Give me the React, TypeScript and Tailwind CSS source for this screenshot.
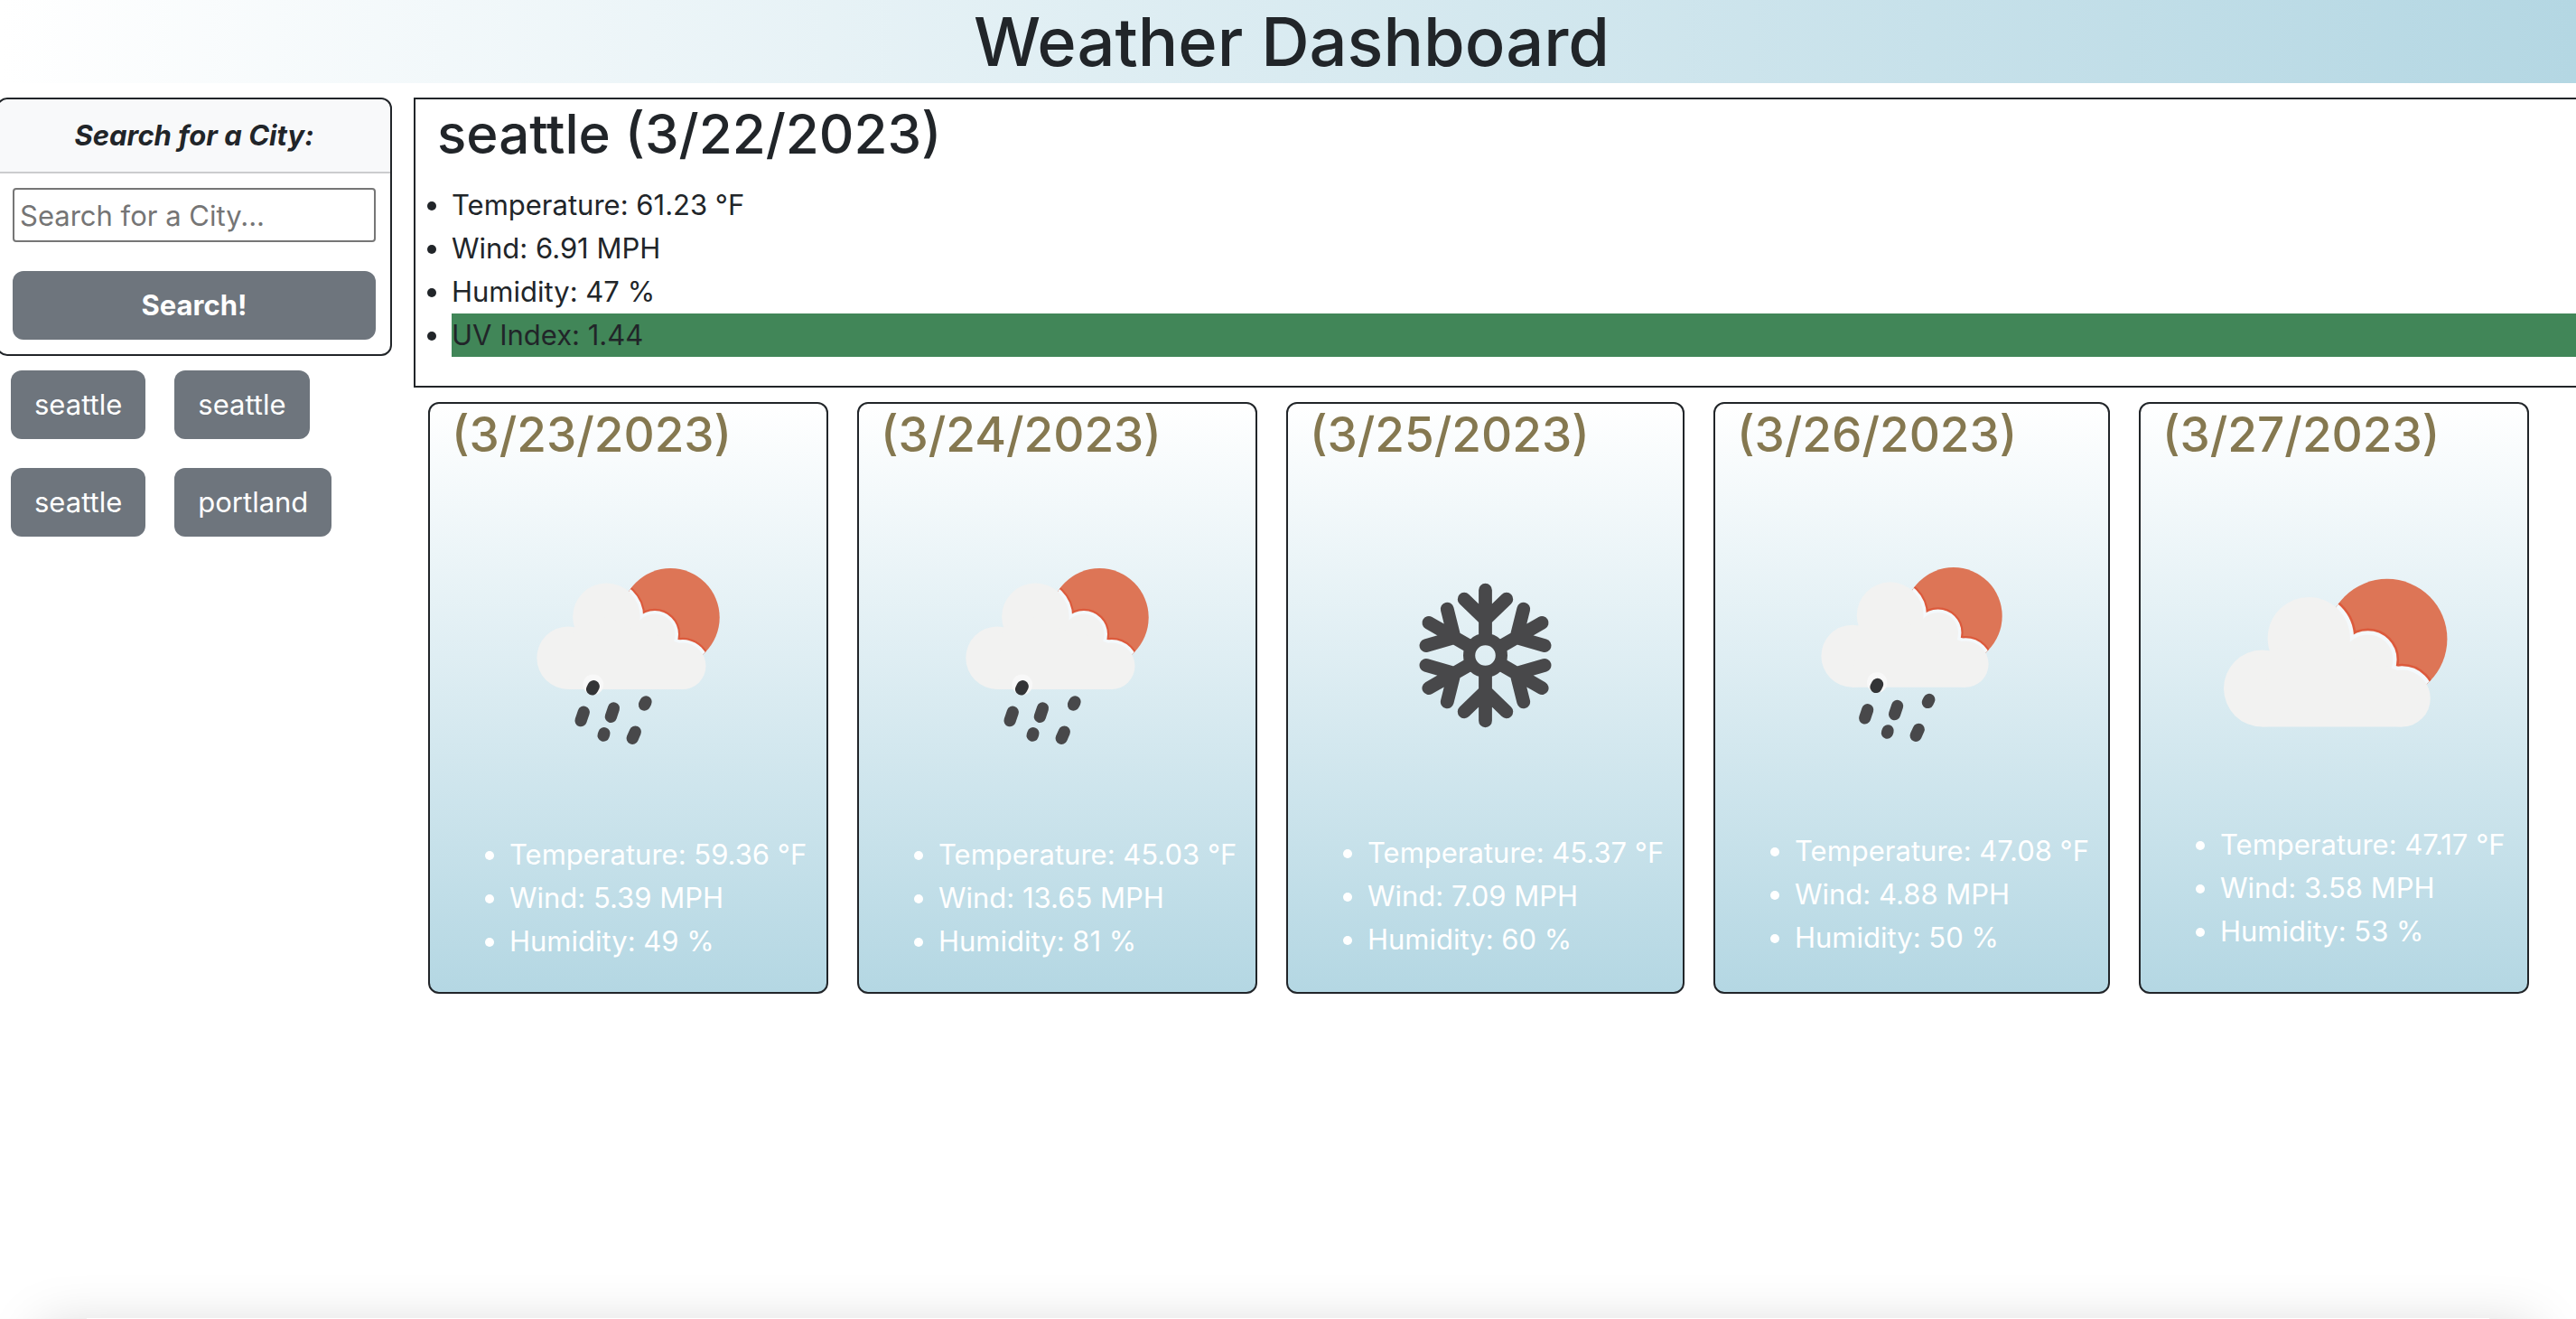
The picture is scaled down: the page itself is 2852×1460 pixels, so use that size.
import React from "react";

type Kind = "rain" | "snow" | "cloud";

interface Day {
  date: string;
  kind: Kind;
  temp: string;
  wind: string;
  humidity: string;
}

const days: Day[] = [
  { date: "(3/23/2023)", kind: "rain", temp: "59.36", wind: "5.39", humidity: "49" },
  { date: "(3/24/2023)", kind: "rain", temp: "45.03", wind: "13.65", humidity: "81" },
  { date: "(3/25/2023)", kind: "snow", temp: "45.37", wind: "7.09", humidity: "60" },
  { date: "(3/26/2023)", kind: "rain", temp: "47.08", wind: "4.88", humidity: "50" },
  { date: "(3/27/2023)", kind: "cloud", temp: "47.17", wind: "3.58", humidity: "53" },
];

const history = ["seattle", "seattle", "seattle", "portland"];

function SunCloud({ id }: { id: string }) {
  const bumps = (
    <>
      <circle cx="29.1" cy="60.8" r="11.2" />
      <circle cx="42.7" cy="46.2" r="12" />
      <circle cx="59.9" cy="52.4" r="7.3" />
      <circle cx="69.8" cy="63.7" r="8.3" />
      <path d="M29.1 72H69.8V56L60 52.4H56L43 46L31 50Z" />
    </>
  );
  return (
    <g>
      <clipPath id={id}>
        <circle cx="65.5" cy="46.4" r="17.5" />
      </clipPath>
      <circle cx="65.5" cy="46.4" r="17.5" fill="#dd7556" />
      <g clipPath={`url(#${id})`}>
        <g fill="#dc5a3c" stroke="#dc5a3c" strokeWidth="3.6">{bumps}</g>
        <g fill="#f4f9fc" stroke="#f4f9fc" strokeWidth="2.2">{bumps}</g>
      </g>
      <g fill="#f2f2f1">{bumps}</g>
    </g>
  );
}

function Rain({ id }: { id: string }) {
  return (
    <g>
      <g transform="translate(9.9 2.1) scale(0.795)">
        <SunCloud id={id} />
      </g>
      <circle cx="40.1" cy="58" r="2.9" fill="#f8f8f8" />
      <g stroke="#48484a" strokeWidth="3.4" strokeLinecap="round">
        <path d="M40.2 58.5L39.8 59.3" stroke="#333436" />
        <path d="M37.4 65.8L36.6 68.2" />
        <path d="M45.9 64.7L45.1 67.1" />
        <path d="M55 62.9L54.6 63.7" />
        <path d="M43.2 71.8L43 72.4" />
        <path d="M52 71.4L51.2 73.2" />
      </g>
    </g>
  );
}

function Snow() {
  return (
    <g stroke="#48484a" strokeWidth="3.8" strokeLinecap="round" fill="none">
      <circle cx="50" cy="50" r="4.6" strokeWidth="3.4" />
      {[0, 60, 120, 180, 240, 300].map((angle) => (
        <path key={angle} transform={`rotate(${angle} 50 50)`} d="M50 45V31.4M44 34L50 39.8L56 34M50 39.8V44" />
      ))}
    </g>
  );
}

function WeatherIcon({ kind, id }: { kind: Kind; id: string }) {
  return (
    <svg viewBox="0 0 100 100" className="block w-full" aria-hidden="true">
      {kind === "rain" && <Rain id={id} />}
      {kind === "snow" && <Snow />}
      {kind === "cloud" && <SunCloud id={id} />}
    </svg>
  );
}

function DayCard({ day, index }: { day: Day; index: number }) {
  return (
    <article className="min-w-0 rounded-xl border-2 border-[#212529] bg-linear-to-b/srgb from-white to-[#b4d7e3] px-6">
      <h3 className="mb-4 text-[53px] leading-[68px] font-medium text-[#857850]">{day.date}</h3>
      <WeatherIcon kind={day.kind} id={`sun-${index}`} />
      <ul className="mb-8 list-disc pl-16 whitespace-nowrap text-white">
        <li>Temperature: {day.temp} °F</li>
        <li>Wind: {day.wind} MPH</li>
        <li>Humidity: {day.humidity} %</li>
      </ul>
    </article>
  );
}

export default function App() {
  return (
    <div className="flex min-h-screen flex-col overflow-hidden bg-white font-['Inter',sans-serif] text-[31px] leading-12 text-[#212529]">
      <header className="bg-linear-to-r/srgb from-white to-[#b4d7e3] pl-2">
        <h1 className="text-center text-[74px] leading-[92px] font-medium">Weather Dashboard</h1>
      </header>
      <div className="mt-4 flex grow items-start gap-6">
        <aside className="-ml-1 w-[438px] shrink-0">
          <form className="rounded-xl border-2 border-[#212529]" onSubmit={(e) => e.preventDefault()}>
            <label htmlFor="city" className="block rounded-t-xl border-b-2 border-[#cbccce] bg-[#f8f9fa] py-4 text-center font-bold italic">
              Search for a City:
            </label>
            <div className="flex flex-col gap-8 p-4">
              <input
                id="city"
                type="text"
                placeholder="Search for a City..."
                className="h-15 w-full rounded-[4px] border-2 border-[#767676] px-1.5 placeholder:text-[#757575]"
              />
              <button type="submit" className="h-19 rounded-xl bg-[#6e757d] font-bold text-white">
                Search!
              </button>
            </div>
          </form>
          <div className="mt-4 ml-4 flex flex-wrap gap-8">
            {history.map((city, i) => (
              <button key={i} type="button" className="h-19 rounded-xl bg-[#6e757d] px-6.5 text-white">
                {city}
              </button>
            ))}
          </div>
        </aside>
        <main className="min-w-0 grow">
          <section className="-mr-1 border-2 border-[#212529] pb-8">
            <h2 className="mb-4 pl-6 text-[60px] leading-[77px] font-medium">seattle (3/22/2023)</h2>
            <ul className="list-disc pl-10">
              <li>Temperature: 61.23 °F</li>
              <li>Wind: 6.91 MPH</li>
              <li>Humidity: 47 %</li>
              <li className="bg-[#418658]">UV Index: 1.44</li>
            </ul>
          </section>
          <section className="mt-4 mr-[52px] ml-4 grid grid-cols-[443fr_443fr_441fr_439fr_432fr] gap-8">
            {days.map((day, i) => (
              <DayCard key={day.date} day={day} index={i} />
            ))}
          </section>
        </main>
      </div>
      <div className="mx-24 h-px shadow-[0_60px_60px_50px_rgba(0,0,0,0.17)]" />
    </div>
  );
}
